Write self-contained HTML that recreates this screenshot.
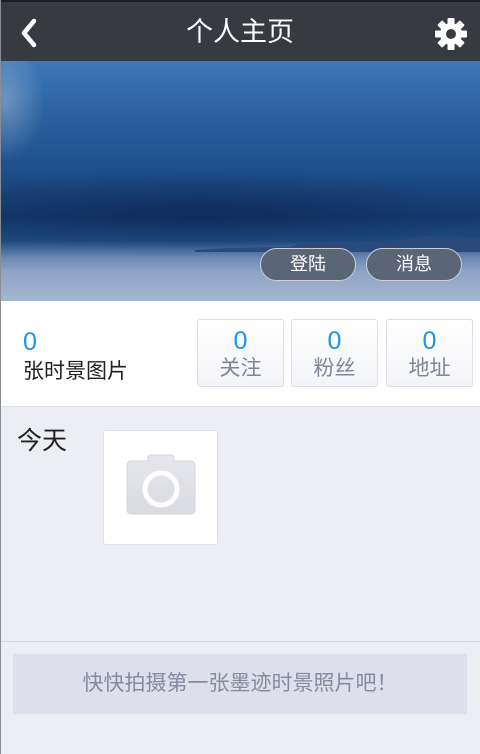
<!DOCTYPE html>
<html><head><meta charset="utf-8"><style>
*{margin:0;padding:0;box-sizing:border-box}
body{width:480px;height:754px;overflow:hidden;background:#eceef3;font-family:"Liberation Sans","Noto Sans CJK SC",sans-serif;position:relative}
.hdr{position:absolute;left:0;top:0;width:480px;height:61px;background:#383a41;border-top:2px solid #1e1f22}
.hdr .t{position:absolute;left:0;right:0;top:14px;text-align:center;color:#fff;font-size:27px;line-height:32px}
.sky{position:absolute;left:0;top:61px;width:480px;height:240px;
background:linear-gradient(180deg,#3d78b8 0%,#2c63a3 20%,#1f4f8c 45%,#143a6e 65%,#1e4a80 75%,#6a88b3 82%,#8ea5c6 88%,#a3b6cf 100%)}
.sky:before{content:"";position:absolute;inset:0;background:radial-gradient(ellipse 40px 60px at 5px 40px,rgba(200,215,235,.4),transparent),radial-gradient(ellipse 300px 40px at 200px 150px,rgba(10,30,70,.5),transparent)}
.mtn{position:absolute;left:195px;top:175px;width:285px;height:16px}
.btn{position:absolute;top:187px;height:33px;border:1.5px solid #c8cfd8;border-radius:17px;background:#5a6576;color:#fff;font-size:18px;text-align:center;line-height:30px}
.stats{position:absolute;left:0;top:301px;width:480px;height:106px;background:#fff;border-bottom:1px solid #dcdfe6}
.box{position:absolute;top:18px;width:87px;height:68px;border:1px solid #dcdfe6;border-radius:3px;background:linear-gradient(#fff,#f3f4f8);text-align:center}
.box b{display:block;color:#1a96e6;font-weight:normal;font-size:25px;line-height:26px;margin-top:8px}
.box span{display:block;color:#808699;font-size:21px;line-height:30px}
.line{position:absolute;left:0;top:641px;width:480px;height:1px;background:#d5d8e0}
.ban{position:absolute;left:13px;top:654px;width:454px;height:60px;background:#dde0ea;color:#858b9f;font-size:21px;text-align:center;line-height:60px}
</style></head><body>
<div class="hdr">
<svg style="position:absolute;left:20px;top:16px" width="18" height="30" viewBox="0 0 18 30"><path d="M14 3 L4 15 L14 27" fill="none" stroke="#fff" stroke-width="4.5" stroke-linecap="round" stroke-linejoin="round"/></svg>
<div class="t">个人主页</div>
<svg style="position:absolute;left:434px;top:15px" width="34" height="34" viewBox="0 0 34 34"><g fill="#fff" transform="translate(17 17)"><circle r="11"/><g id="k"><rect x="-3.5" y="-16" width="7" height="8" rx="1"/></g><use href="#k" transform="rotate(45)"/><use href="#k" transform="rotate(90)"/><use href="#k" transform="rotate(135)"/><use href="#k" transform="rotate(180)"/><use href="#k" transform="rotate(225)"/><use href="#k" transform="rotate(270)"/><use href="#k" transform="rotate(315)"/></g><circle cx="17" cy="17" r="5" fill="#383a41"/></svg>
</div>
<div class="sky">
<svg class="mtn" viewBox="0 0 285 16" preserveAspectRatio="none"><path d="M0 14 L30 12 L95 11 L110 6 L200 5 L230 0 L265 1 L285 3 L285 16 L0 16Z" fill="#2a4a7c"/></svg>
<div class="btn" style="left:260px;width:96px">登陆</div>
<div class="btn" style="left:366px;width:96px">消息</div>
</div>
<div class="stats">
<div style="position:absolute;left:23px;top:28px;color:#1a96e6;font-size:25px;line-height:26px">0</div>
<div style="position:absolute;left:23px;top:56px;color:#222;font-size:21px;line-height:30px">张时景图片</div>
<div class="box" style="left:197px"><b>0</b><span>关注</span></div>
<div class="box" style="left:291px"><b>0</b><span>粉丝</span></div>
<div class="box" style="left:386px"><b>0</b><span>地址</span></div>
</div>
<div style="position:absolute;left:17px;top:425px;font-size:25px;color:#222;line-height:32px">今天</div>
<div style="position:absolute;left:103px;top:430px;width:115px;height:115px;background:#fff;border:1px solid #e0e2e8;border-radius:3px">
<svg style="position:absolute;left:22px;top:23px" width="70" height="62" viewBox="0 0 70 62"><defs><linearGradient id="g" x1="0" y1="0" x2="0" y2="1"><stop offset="0" stop-color="#e6e7ec"/><stop offset="1" stop-color="#d9dbe1"/></linearGradient></defs><path d="M22 4 Q22 1 25 1 L45 1 Q48 1 48 4 L48 7 L64 7 Q69 7 69 12 L69 55 Q69 60 64 60 L6 60 Q1 60 1 55 L1 12 Q1 7 6 7 L22 7Z" fill="url(#g)" stroke="#d3d5dc"/><circle cx="35" cy="35" r="16" fill="none" stroke="#fff" stroke-width="5"/></svg>
</div>
<div class="line"></div>
<div class="ban">快快拍摄第一张墨迹时景照片吧！</div>
<div style="position:absolute;left:0;top:0;width:1px;height:754px;background:#8a8d94"></div>
</body></html>
